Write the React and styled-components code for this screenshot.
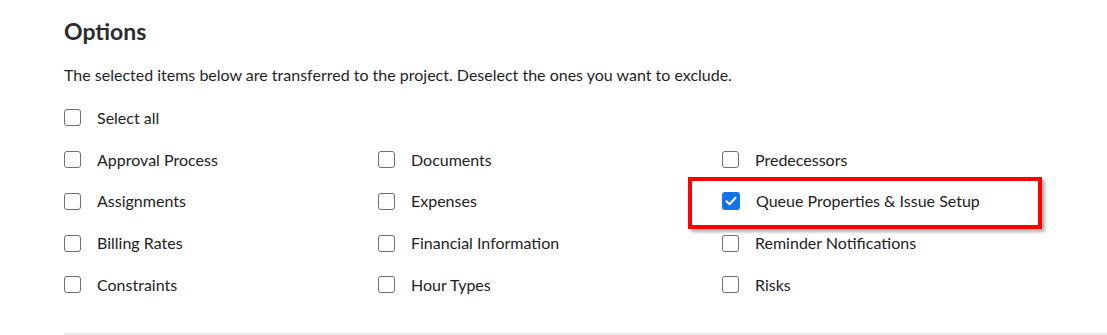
import React from "react";
import styled, { createGlobalStyle } from "styled-components";

const Global = createGlobalStyle`
  html, body { margin: 0; padding: 0; background: #fff; }
  body { font-family: Lato, "Noto Sans", sans-serif; color: #222; }
`;

const Page = styled.div`
  padding: 17px 0 0 64px;
`;

const Title = styled.h2`
  margin: 0;
  font-size: 23px;
  font-weight: 700;
  line-height: 28px;
  color: #2c2c2c;
`;

const Description = styled.p`
  margin: 20px 0 0;
  font-size: 16px;
  line-height: 20px;
  color: #1f1f1f;
`;

const List = styled.div`
  margin-top: 12px;
  display: grid;
  grid-template-columns: 314px 344px 1fr;
  grid-auto-rows: 41.75px;
  align-items: center;
`;

const Item = styled.label`
  position: relative;
  display: flex;
  align-items: center;
  gap: 16px;
  font-size: 16px;
  line-height: 20px;
  color: #222;
  grid-column: ${(p) => (p.$full ? "1 / -1" : "auto")};
`;

const Box = styled.span`
  width: ${(p) => (p.$checked ? "18px" : "17px")};
  height: ${(p) => (p.$checked ? "18px" : "17px")};
  box-sizing: border-box;
  border-radius: 3px;
  border: ${(p) => (p.$checked ? "none" : "1.5px solid #707070")};
  background: ${(p) => (p.$checked ? "#1473e6" : "#fff")};
  display: flex;
  align-items: center;
  justify-content: center;
  flex-shrink: 0;
`;

const Highlight = styled.span`
  position: absolute;
  left: -34px;
  top: -14px;
  width: 354px;
  height: 52px;
  box-sizing: border-box;
  border: 4px solid #ff0000;
  box-shadow: 3px 3px 3px rgba(0, 0, 0, 0.3);
  pointer-events: none;
`;

const Divider = styled.hr`
  margin: 27px 0 0;
  border: none;
  border-top: 2px solid #eaeaea;
`;

const Check = () => (
  <svg width="12" height="10" viewBox="0 0 12 10">
    <path d="M1.5 5.2 L4.6 8.2 L10.5 1.8" fill="none" stroke="#fff" strokeWidth="2" strokeLinecap="round" strokeLinejoin="round" />
  </svg>
);

const items = [
  ["Approval Process", false],
  ["Documents", false],
  ["Predecessors", false],
  ["Assignments", false],
  ["Expenses", false],
  ["Queue Properties & Issue Setup", true],
  ["Billing Rates", false],
  ["Financial Information", false],
  ["Reminder Notifications", false],
  ["Constraints", false],
  ["Hour Types", false],
  ["Risks", false],
];

export default function App() {
  return (
    <>
      <Global />
      <Page>
        <Title>Options</Title>
        <Description>
          The selected items below are transferred to the project. Deselect the ones you want to exclude.
        </Description>
        <List>
          <Item $full>
            <Box />
            Select all
          </Item>
          {items.map(([label, checked]) => (
            <Item key={label}>
              <Box $checked={checked}>{checked && <Check />}</Box>
              {label}
              {checked && <Highlight />}
            </Item>
          ))}
        </List>
        <Divider />
      </Page>
    </>
  );
}
